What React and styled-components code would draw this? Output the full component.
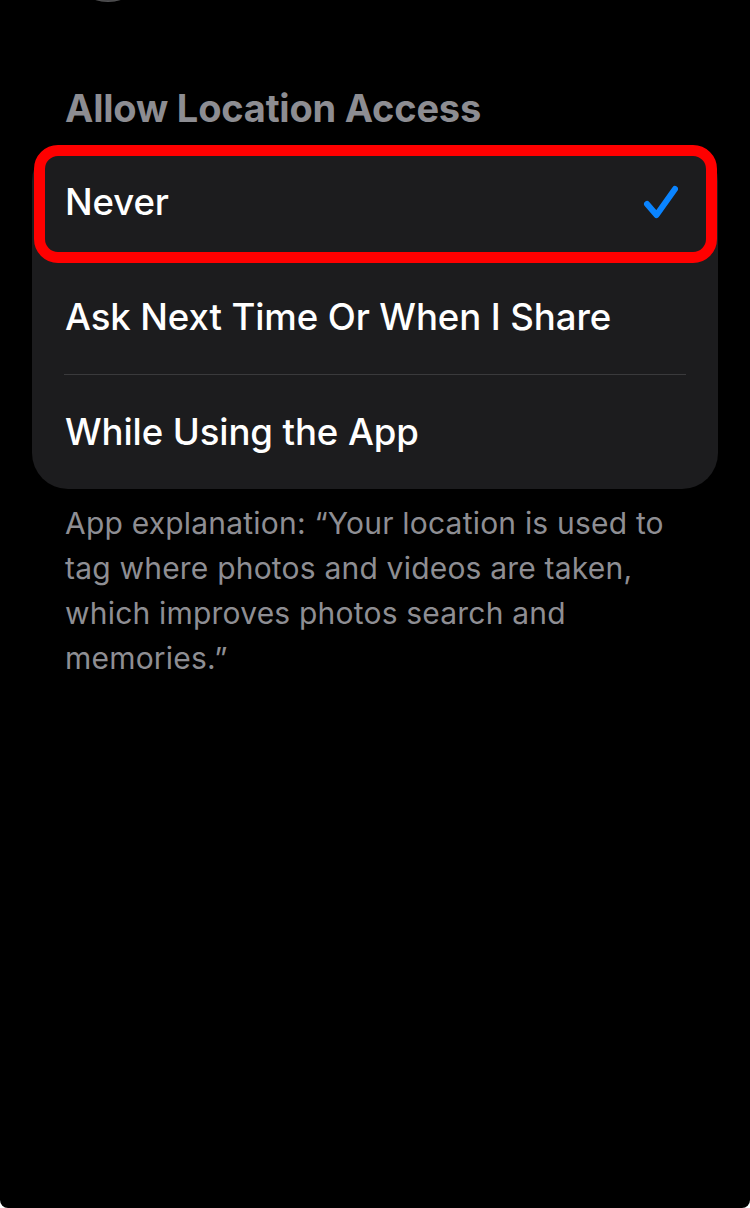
import styled, { createGlobalStyle } from "styled-components"

const GlobalStyle = createGlobalStyle`
  html, body {
    margin: 0;
    padding: 0;
    background: #ffffff;
  }
  body {
    font-family: Inter, "Noto Sans", "Liberation Sans", sans-serif;
    -webkit-font-smoothing: antialiased;
  }
`

const Screen = styled.div`
  width: 750px;
  height: 1208px;
  background: #000000;
  border-radius: 0 0 8px 8px;
  overflow: hidden;
  padding: 0 32px;
  box-sizing: border-box;
  display: flex;
  flex-direction: column;
`

const NavBar = styled.div`
  display: flex;
  align-items: flex-start;
  height: 0;
`

const BackButton = styled.div`
  width: 84px;
  height: 84px;
  margin-top: -82px;
  margin-left: 34px;
  border-radius: 50%;
  background: #1c1c1e;
  box-shadow: inset 0 -2px 2px rgba(255, 255, 255, 0.25);
`

const SectionTitle = styled.h2`
  margin: 86px 0 0 33px;
  font-size: 38px;
  line-height: 44px;
  font-weight: 700;
  color: #8d8d92;
  letter-spacing: -0.2px;
`

const Card = styled.div`
  margin-top: 15px;
  background: #1c1c1e;
  border-radius: 36px;
  display: flex;
  flex-direction: column;
`

const Row = styled.div`
  position: relative;
  height: 114px;
  display: flex;
  align-items: center;
  justify-content: space-between;
  padding: 0 40px 0 33px;
`

const RowLabel = styled.span`
  font-size: 36.6px;
  font-weight: 500;
  color: #ffffff;
  letter-spacing: -0.1px;
`

const Separator = styled.div`
  height: 1px;
  margin: 0 32px;
  background: #3a3a3c;
`

const Highlight = styled.div`
  position: absolute;
  top: 0;
  left: 2px;
  right: 1px;
  bottom: -4px;
  border: 11px solid #ff0000;
  border-radius: 24px;
  pointer-events: none;
`

const Footnote = styled.p`
  margin: 12px 0 0 33px;
  padding-right: 40px;
  font-size: 30px;
  line-height: 45px;
  font-weight: 400;
  color: #8e8e93;
  letter-spacing: 0.2px;
`

const Check = () => (
  <svg width="36" height="34" viewBox="0 0 36 34" fill="none">
    <path
      d="M5 19 L14.5 30 L33 4"
      stroke="#0a84ff"
      strokeWidth="6"
      strokeLinecap="round"
      strokeLinejoin="round"
    />
  </svg>
)

const options = [
  { id: "never", label: "Never" },
  { id: "ask", label: "Ask Next Time Or When I Share" },
  { id: "using", label: "While Using the App" },
]

export default function App() {
  const selected = "never"

  return (
    <>
      <GlobalStyle />
      <Screen>
        <NavBar>
          <BackButton />
        </NavBar>

        <SectionTitle>Allow Location Access</SectionTitle>

        <Card>
          {options.map((opt, i) => (
            <div key={opt.id}>
              {i > 0 && <Separator />}
              <Row>
                <RowLabel>{opt.label}</RowLabel>
                {opt.id === selected && <Check />}
                {opt.id === selected && <Highlight />}
              </Row>
            </div>
          ))}
        </Card>

        <Footnote>
          App explanation: “Your location is used to tag where photos and videos are taken, which
          improves photos search and memories.”
        </Footnote>
      </Screen>
    </>
  )
}
